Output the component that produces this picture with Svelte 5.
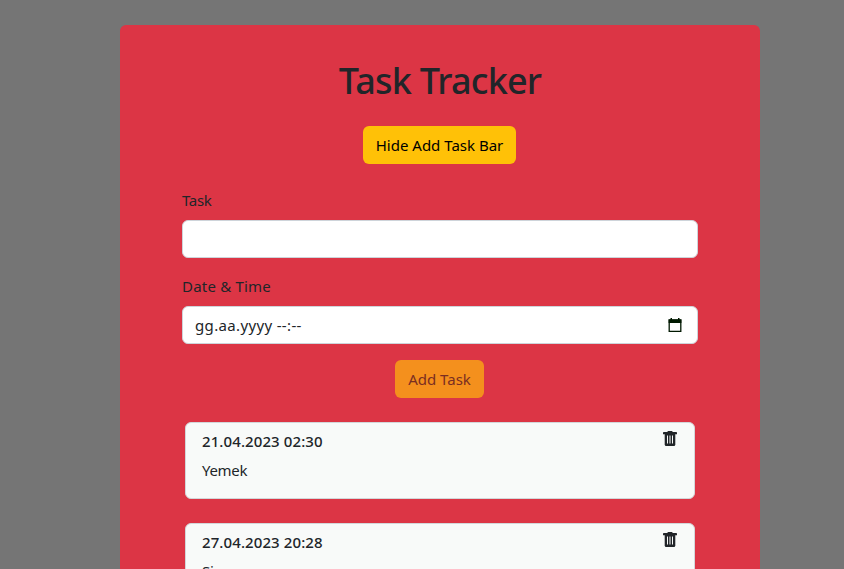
<script>
  const tasks = [
    { date: '21.04.2023 02:30', text: 'Yemek' },
    { date: '27.04.2023 20:28', text: 'Si' },
  ];
</script>

<main>
  <section class="panel">
    <h1>Task Tracker</h1>
    <button class="toggle">Hide Add Task Bar</button>
    <form>
      <label for="task" class="first">Task</label>
      <input id="task" class="control" type="text" />
      <label for="date" class="second">Date &amp; Time</label>
      <div id="date" class="control date">
        <span>gg.aa.yyyy --:--</span>
        <svg width="14" height="15" viewBox="0 0 14 15" fill="none">
          <path d="M1.2 2h11.6v11.3H1.2z" stroke="#001800" stroke-width="1.3" />
          <path d="M.6 1.5h12.8V5H.6zM2.5 0h1.5v2H2.5zM10 0h1.5v2H10z" fill="#001800" />
        </svg>
      </div>
    </form>
    <button class="add">Add Task</button>
    <div class="list">
      {#each tasks as task}
        <article>
          <div>
            <h2>{task.date}</h2>
            <p>{task.text}</p>
          </div>
          <svg width="14" height="16" viewBox="0 0 14 16">
            <path d="M5 0h4l.8 1h3.4q.8 0 .8.8v1.4H0V1.8Q0 1 .8 1h3.4z" fill="#212529" />
            <path d="M1.7 3h10.6v10.5q0 1.5-1.5 1.5H3.2q-1.5 0-1.5-1.5z" fill="#212529" />
            <path d="M4.5 4.5v8M9.5 4.5v8" stroke="#f8faf9" />
            <path d="M7 4.5v8" stroke="#929496" stroke-width="2" />
          </svg>
        </article>
      {/each}
    </div>
  </section>
</main>

<style>
  :global(body) {
    background: #757575;
    overflow: hidden;
  }
  * {
    box-sizing: border-box;
  }
  main {
    height: 569px;
    overflow: hidden;
    padding: 25px 84px 0 120px;
    font: 15px/24px "Noto Sans", sans-serif;
    color: #212529;
  }
  .panel {
    width: 640px;
    height: 700px;
    padding: 32px 62px 0;
    border-radius: 6px;
    background: #dc3545;
    display: flex;
    flex-direction: column;
    align-items: center;
  }
  h1 {
    margin: 0 0 21px;
    font-size: 36px;
    font-weight: 500;
    line-height: 48px;
    letter-spacing: -0.8px;
    white-space: nowrap;
  }
  button {
    flex: none;
    height: 38px;
    margin-right: 1px;
    padding: 0;
    border: 0;
    border-radius: 6px;
    background: #ffc107;
    color: #000;
    font: inherit;
    white-space: nowrap;
  }
  .toggle {
    width: 153px;
  }
  .add {
    width: 89px;
    margin-top: 16px;
    background: #f4901d;
    color: #7a2e22;
  }
  form {
    width: 516px;
    margin-top: 24px;
  }
  label {
    display: block;
    margin-bottom: 8px;
  }
  .first {
    letter-spacing: -0.3px;
  }
  .second {
    margin-top: 16px;
    letter-spacing: 0.2px;
  }
  .control {
    display: flex;
    width: 100%;
    height: 38px;
    padding: 0 15px 0 12px;
    border: 1px solid #ced4da;
    border-radius: 6px;
    background: #fff;
  }
  .date {
    align-items: center;
    justify-content: space-between;
    letter-spacing: 0.35px;
  }
  .list {
    width: 510px;
    margin-top: 24px;
    display: flex;
    flex-direction: column;
    gap: 24px;
  }
  article {
    display: flex;
    justify-content: space-between;
    height: 77px;
    padding: 8px 17px 0 16px;
    border: 1px solid #d3d7da;
    border-radius: 6px;
    background: #f8faf9;
  }
  h2 {
    margin: 0;
    font-size: 15px;
    font-weight: 500;
    line-height: 20px;
    letter-spacing: 0.1px;
  }
  p {
    margin: 7px 0 0;
    letter-spacing: -0.3px;
  }
</style>
